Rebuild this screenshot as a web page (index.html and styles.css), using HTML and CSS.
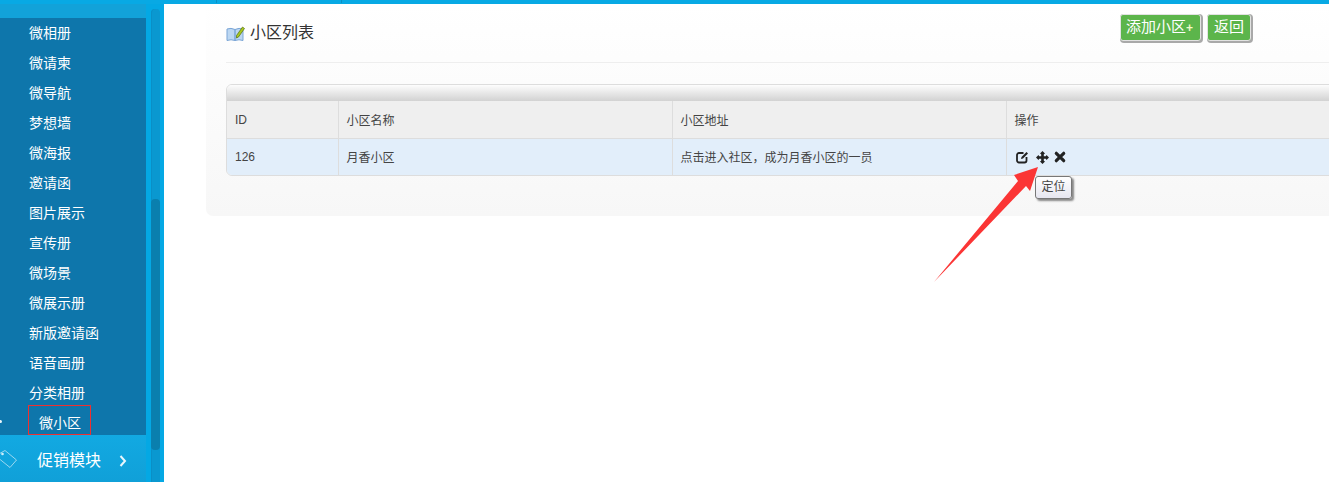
FILE: index.html
```html
<!DOCTYPE html>
<html lang="zh-CN">
<head>
<meta charset="utf-8">
<title>小区列表</title>
<link rel="stylesheet" href="styles.css">
</head>
<body>
<div class="topbar"></div>
<div class="layout">
  <aside class="sidebar">
    <nav class="menu">
      <div class="band"></div>
      <ul class="submenu">
        <li>微相册</li><li>微请柬</li><li>微导航</li><li>梦想墙</li><li>微海报</li><li>邀请函</li><li>图片展示</li><li>宣传册</li><li>微场景</li><li>微展示册</li><li>新版邀请函</li><li>语音画册</li><li>分类相册</li>
        <li class="current"><span class="dot"></span><span class="marked">微小区</span></li>
      </ul>
      <div class="module">
        <svg class="tag" width="18" height="20" viewBox="0 0 18 20"><path d="M-3 6 L5 1.500 L16.500 11 L10 18.500 L-3 8" fill="none" stroke="#9ad8f0" stroke-width="1"/><circle cx="2.500" cy="5" r="1.300" fill="#cfeefa"/></svg>
        <span class="module-name">促销模块</span>
        <svg class="chev" width="8" height="12" viewBox="0 0 8 12"><path d="M1.500 1 L6 6 L1.500 11" fill="none" stroke="#e8f7fd" stroke-width="2"/></svg>
      </div>
    </nav>
    <div class="track"><div class="thumb"></div></div>
  </aside>
  <main class="main">
    <section class="panel">
      <header class="head">
        <h1 class="title">
          <svg class="book" width="20" height="16" viewBox="0 0 20 16"><path d="M1 3 Q5 1.500 9 3.500 L9 14.500 Q5 13 1 14.500Z M9 3.500 Q13 1.500 17 3 L17 14.500 Q13 13 9 14.500Z" fill="#bcd7f2" stroke="#7aa5d6" stroke-width="1"/><path d="M10.500 9.500 L16.500 1 L18.500 2.500 L12.500 11 L10.500 12Z" fill="#a8c81e" stroke="#556b10" stroke-width=".7"/></svg>
          <span>小区列表</span>
        </h1>
        <div class="actions">
          <a class="btn btn-add">添加小区<small>+</small></a>
          <a class="btn btn-back">返回</a>
        </div>
      </header>
      <div class="tablebox">
        <div class="strip"></div>
        <table class="grid">
          <thead><tr><th class="c1">ID</th><th class="c2">小区名称</th><th class="c3">小区地址</th><th>操作</th></tr></thead>
          <tbody><tr><td>126</td><td>月香小区</td><td>点击进入社区，成为月香小区的一员</td><td>
            <span class="ops">
              <svg class="op-edit" width="14" height="14" viewBox="0 0 14 14"><path d="M10.500 7 V10.500 A2 2 0 0 1 8.500 12.500 H3 A2 2 0 0 1 1 10.500 V5 A2 2 0 0 1 3 3 H7.500" fill="none" stroke="#222" stroke-width="1.800"/><path d="M5 9 L5.500 7 L10.500 2 L12 3.500 L7 8.500Z" fill="#222"/></svg>
              <svg class="op-move" width="13" height="13" viewBox="0 0 13 13"><path d="M6.500 0 L9 2.500 L7.800 3.200 V5.200 H9.800 L10.500 4 L13 6.500 L10.500 9 L9.800 7.800 H7.800 V9.800 L9 10.500 L6.500 13 L4 10.500 L5.200 9.800 V7.800 H3.200 L2.500 9 L0 6.500 L2.500 4 L3.200 5.200 H5.200 V3.200 L4 2.500Z" fill="#222"/></svg>
              <svg class="op-del" width="12" height="12" viewBox="0 0 12 12"><path d="M2.300 2.300 L9.700 9.700 M9.700 2.300 L2.300 9.700" stroke="#222" stroke-width="3.200" stroke-linecap="round"/></svg>
            </span>
          </td></tr></tbody>
        </table>
      </div>
    </section>
  </main>
</div>
<div class="tip">定位</div>
<svg class="arrow" width="110" height="120" viewBox="934 165 110 120"><path d="M934 282 L1018 181 L1014 175 L1038 167 L1030 191 L1026 186Z" fill="#fb3535"/></svg>
</body>
</html>
```
FILE: styles.css
```css
* { box-sizing: border-box; }
html, body { margin: 0; height: 100%; }
body {
  overflow: hidden;
  background: #fff;
  color: #333;
  font-family: "Liberation Sans", "Noto Sans CJK SC", sans-serif;
  display: flex;
  flex-direction: column;
  height: 482px;
}
.topbar {
  height: 4px;
  flex: none;
  background:
    linear-gradient(#0a8fc4, #0a8fc4) 216px 0 / 1px 3px no-repeat,
    linear-gradient(#0a8fc4, #0a8fc4) 341px 0 / 1px 3px no-repeat,
    #08a9e4;
}
.layout { flex: 1; display: flex; min-height: 0; }
.sidebar { width: 164px; flex: none; display: flex; background: #04a8e4; }
.menu { width: 146px; flex: none; display: flex; flex-direction: column; }
.band { height: 14px; flex: none; background: #12a2d9; }
.submenu {
  list-style: none;
  margin: 0;
  padding: 0;
  background: #0e76ab;
  color: #fff;
  font-size: 14px;
}
.submenu li {
  height: 30px;
  line-height: 30px;
  padding-left: 29px;
  position: relative;
}
.submenu .current { padding-left: 28px; }
.marked {
  display: block;
  width: 63px;
  height: 30px;
  line-height: 34px;
  margin-top: -3px;
  padding-left: 10px;
  border: 1px solid #ef3030;
}
.dot {
  position: absolute;
  left: -1px;
  top: 15px;
  width: 3px;
  height: 3px;
  border-radius: 50%;
  background: #e8f4fa;
}
.module {
  flex: 1;
  display: flex;
  align-items: center;
  background: linear-gradient(#12a9e2, #10a0d8);
  color: #fff;
  position: relative;
  font-size: 16px;
  padding: 4px 0 0 37px;
}
.module-name { line-height: 40px; }
.tag { position: absolute; left: 0; top: 14px; }
.chev { margin-left: 18px; }
.track {
  width: 9px;
  margin: 5px 0 0 5px;
  background: #0a98d0;
  border-radius: 4px 4px 0 0;
  position: relative;
  box-shadow: inset 1px 0 0 #0a8fc6;
}
.thumb {
  position: absolute;
  left: 0;
  right: 0;
  top: 190px;
  height: 251px;
  border-radius: 4px;
  background: #0a7fae;
}
.main { flex: 1; min-width: 0; overflow: hidden; padding-left: 42px; }
.panel {
  width: 1300px;
  height: 212px;
  padding: 0 20px;
  background: linear-gradient(#fff, #f7f7f7);
  border-radius: 0 0 0 7px;
}
.head {
  height: 59px;
  display: flex;
  justify-content: space-between;
  border-bottom: 1px solid #eeeeee;
}
.title {
  margin: 0;
  padding-top: 17px;
  font-size: 16px;
  font-weight: 400;
  line-height: 24px;
  color: #333;
  display: flex;
  align-items: flex-start;
  gap: 4px;
  height: 41px;
}
.book { margin-top: 5px; }
.actions {
  display: flex;
  gap: 6px;
  margin-right: 235px;
  padding-top: 10px;
  align-items: flex-start;
}
.btn {
  display: block;
  height: 27px;
  line-height: 24px;
  font-size: 15px;
  color: #fff;
  background: #5cb54b;
  border: 1px solid #e2e2e2;
  border-radius: 3px;
  box-shadow: 1px 1px 0 1px #a9a9a9;
}
.btn-add { padding: 0 7px 0 5px; }
.btn-back { padding: 0 6px; }
.btn small { font-size: 12px; color: #f4f9c9; font-weight: 700; }
.tablebox {
  margin-top: 21px;
  width: 1240px;
  border: 1px solid #dddddd;
  border-radius: 6px 0 0 6px;
  overflow: hidden;
}
.strip { height: 16px; background: linear-gradient(#fdfdfd, #d2d2d2); }
.grid {
  width: 100%;
  border-collapse: collapse;
  table-layout: fixed;
  font-size: 12px;
  color: #444;
}
.grid th, .grid td {
  padding: 0 8px;
  text-align: left;
  font-weight: 400;
  border-left: 1px solid #dddddd;
}
.grid th:first-child, .grid td:first-child { border-left: 0; }
.grid th { height: 37px; padding-top: 1px; background: #efefef; border-bottom: 1px solid #dddddd; }
.grid td { background: #e2eefa; height: 37px; }
.c1 { width: 111px; }
.c2 { width: 334px; }
.c3 { width: 334px; }
.ops { display: flex; align-items: center; margin-top: 1px; }
.op-edit { margin-left: 1px; }
.op-move { margin-left: 6px; }
.op-del { margin-left: 5px; }
.tip {
  position: absolute;
  left: 1035px;
  top: 176px;
  width: 37px;
  height: 23px;
  line-height: 21px;
  text-align: center;
  font-size: 12px;
  color: #444;
  background: linear-gradient(#fff, #e6e6f0);
  border: 1px solid #777;
  border-radius: 3px;
  box-shadow: 2px 2px 2px #888;
}
.arrow { position: absolute; left: 934px; top: 165px; }
```
